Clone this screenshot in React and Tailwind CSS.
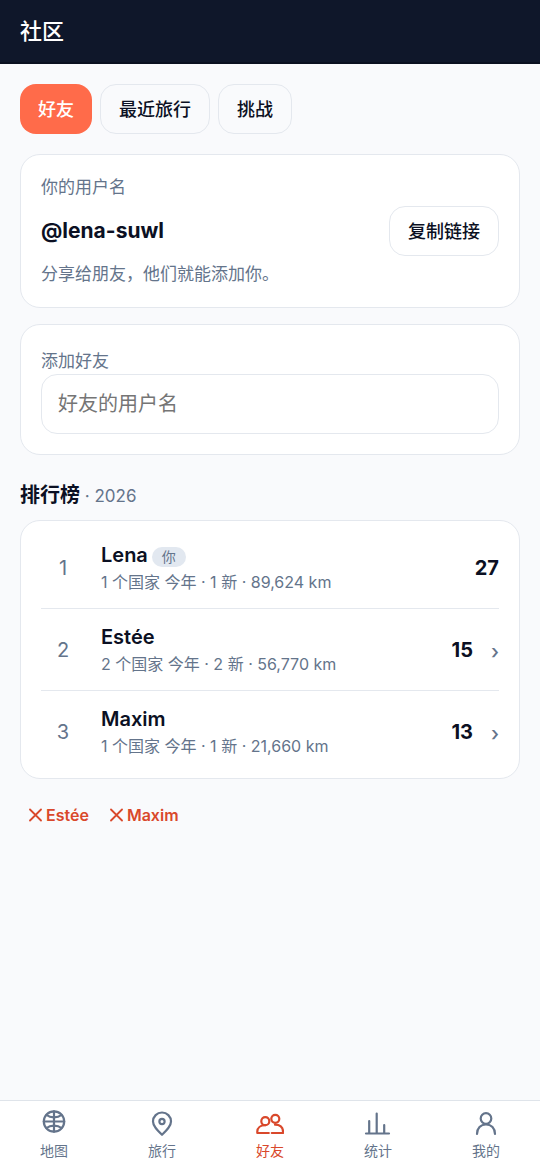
import { useState } from 'react';
import clsx from 'clsx';

const TABS = [
  { id: 'friends', label: '好友' },
  { id: 'trips', label: '最近旅行' },
  { id: 'challenges', label: '挑战' },
];

const LEADERBOARD = [
  { name: 'Lena', isMe: true, stats: '1 个国家 今年 · 1 新 · 89,624 km', score: 27 },
  { name: 'Estée', isMe: false, stats: '2 个国家 今年 · 2 新 · 56,770 km', score: 15 },
  { name: 'Maxim', isMe: false, stats: '1 个国家 今年 · 1 新 · 21,660 km', score: 13 },
];

const NAV_ITEMS = [
  { id: 'map', label: '地图', Icon: GlobeIcon },
  { id: 'trips', label: '旅行', Icon: PinIcon },
  { id: 'friends', label: '好友', Icon: FriendsIcon },
  { id: 'stats', label: '统计', Icon: StatsIcon },
  { id: 'me', label: '我的', Icon: PersonIcon },
];

export default function App() {
  const [activeTab, setActiveTab] = useState('friends');
  const [username, setUsername] = useState('');

  return (
    <div className="flex min-h-screen flex-col bg-[#f9fafc] font-['Inter','Noto_Sans_CJK_SC',sans-serif] text-[#0b1023]">
      <header className="flex h-16 items-center border-b-2 border-[#0a1020] bg-[#0f172a] px-5">
        <h1 className="text-[22px] leading-8 font-medium text-white">社区</h1>
      </header>

      <main className="flex-1 px-5 pt-5 pb-8">
        <div className="mb-5 flex gap-2">
          {TABS.map((tab) => (
            <button
              key={tab.id}
              type="button"
              onClick={() => setActiveTab(tab.id)}
              className={clsx(
                'h-[50px] rounded-2xl px-[18px] text-[18px] font-medium',
                activeTab === tab.id ? 'bg-[#ff6b4a] text-white' : 'border border-[#e4e8ee]'
              )}
            >
              {tab.label}
            </button>
          ))}
        </div>

        <section className="rounded-[20px] border border-[#e4e8ee] bg-white p-5">
          <p className="text-[17px] leading-[25px] text-[#64748b]">你的用户名</p>
          <div className="my-1.5 flex items-center justify-between">
            <span className="text-[21px] font-bold">@lena-suwl</span>
            <button
              type="button"
              className="h-[50px] rounded-2xl border border-[#e4e8ee] px-[18px] text-[18px] font-medium"
            >
              复制链接
            </button>
          </div>
          <p className="text-[17px] leading-[25px] text-[#64748b]">分享给朋友，他们就能添加你。</p>
        </section>

        <section className="mt-4 rounded-[20px] border border-[#e4e8ee] bg-white px-5 pt-6 pb-5">
          <label htmlFor="friend" className="block text-[17px] leading-[25px] text-[#64748b]">
            添加好友
          </label>
          <input
            id="friend"
            type="text"
            value={username}
            onChange={(e) => setUsername(e.target.value)}
            placeholder="好友的用户名"
            className="h-[60px] w-full rounded-2xl border border-[#e4e8ee] bg-white px-4 text-[20px] outline-none placeholder:text-[#757575]"
          />
        </section>

        <h2 className="mt-6 mb-2 text-[20px] leading-8 font-bold">
          排行榜 <span className="text-[17px] font-normal text-[#64748b]">· 2026</span>
        </h2>

        <ol className="divide-y divide-[#e4e8ee] rounded-[20px] border border-[#e4e8ee] bg-white px-5 py-1.5">
          {LEADERBOARD.map((entry, i) => (
            <LeaderboardRow key={entry.name} rank={i + 1} entry={entry} />
          ))}
        </ol>

        <div className="mt-4 flex gap-1">
          {LEADERBOARD.filter((entry) => !entry.isMe).map((entry) => (
            <button
              key={entry.name}
              type="button"
              className="flex h-10 items-center gap-1 px-2 text-[16px] font-semibold text-[#d9482b]"
            >
              <CrossIcon />
              {entry.name}
            </button>
          ))}
        </div>
      </main>

      <nav className="sticky bottom-0 grid grid-cols-5 border-t border-[#dfe4ea] bg-white">
        {NAV_ITEMS.map(({ id, label, Icon }) => (
          <a
            key={id}
            href={`#${id}`}
            className={clsx(
              'flex flex-col items-center pt-2 pb-[9px] text-[14px] leading-5',
              id === 'friends' ? 'text-[#d9482b]' : 'text-[#64748b]'
            )}
          >
            <Icon />
            <span className="mt-1">{label}</span>
          </a>
        ))}
      </nav>
    </div>
  );
}

function LeaderboardRow({ rank, entry }) {
  return (
    <li className="flex items-center py-[13px]">
      <span className="w-11 text-center text-[20px] text-[#64748b]">{rank}</span>
      <div className="ml-4 flex-1">
        <div className="flex h-[30px] items-center gap-1 text-[20px] font-semibold">
          {entry.name}
          {entry.isMe && (
            <span className="mt-1 rounded-full bg-[#e2e8f0] px-2.5 text-[14px] leading-5 font-normal text-[#64748b]">
              你
            </span>
          )}
        </div>
        <p className="text-[16px] leading-[25px] text-[#64748b]">{entry.stats}</p>
      </div>
      <span className="text-[20px] font-bold">{entry.score}</span>
      {!entry.isMe && (
        <span className="ml-[18px] pt-1 text-[20px] leading-6 font-medium text-[#64748b]">›</span>
      )}
    </li>
  );
}

function CrossIcon() {
  return (
    <svg width="14" height="14" viewBox="0 0 14 14" fill="none" stroke="currentColor" strokeWidth="1.8" strokeLinecap="round">
      <path d="M2 1.500l11 11M13 1.500l-11 11" />
    </svg>
  );
}

function NavSvg({ children }) {
  return (
    <svg width="28" height="28" viewBox="0 0 28 28" fill="none" stroke="currentColor" strokeWidth="2.2" strokeLinecap="round" strokeLinejoin="round">
      {children}
    </svg>
  );
}

function GlobeIcon() {
  return (
    <NavSvg>
      <circle cx="14" cy="12.5" r="10.2" />
      <path d="M14 2.3v20.4M3.8 12.5h20.4" />
      <path d="M6.500 6c4 3.200 11 3.200 15 0M6.500 19c4-3.200 11-3.200 15 0" />
    </NavSvg>
  );
}

function PinIcon() {
  return (
    <NavSvg>
      <path d="M14 25.800C9.500 21.500 5 17.300 5 12.500a9 9 0 0 1 18 0c0 4.800-4.500 9-9 13.300z" />
      <circle cx="14" cy="12.500" r="2.600" />
    </NavSvg>
  );
}

function FriendsIcon() {
  return (
    <NavSvg>
      <circle cx="9.300" cy="12.200" r="4" />
      <circle cx="19.300" cy="9.800" r="4" />
      <path d="M12.800 24H1.300v-1.500c0-3.600 3.200-6.300 8-6.300" />
      <path d="M15.800 24H27v-1.500c0-4.500-3.200-6.800-8-6.800" />
    </NavSvg>
  );
}

function StatsIcon() {
  return (
    <NavSvg>
      <path d="M2 24.500h23M5.200 24.500V12M12.700 24.500V4.500M20.200 24.500V16" />
    </NavSvg>
  );
}

function PersonIcon() {
  return (
    <NavSvg>
      <circle cx="14" cy="9.500" r="5.300" />
      <path d="M5 25c0-5.800 3.700-9.500 9-9.500s9 3.700 9 9.500" />
    </NavSvg>
  );
}
